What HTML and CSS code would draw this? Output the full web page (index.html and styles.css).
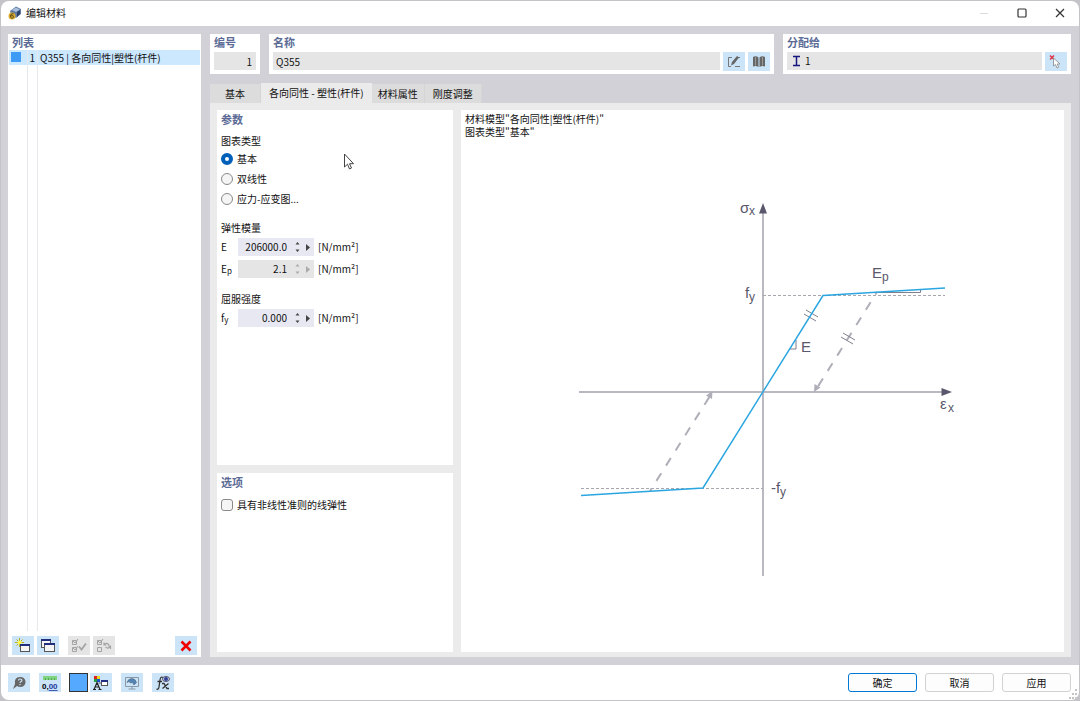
FILE: index.html
```html
<!DOCTYPE html>
<html lang="zh-CN">
<head>
<meta charset="utf-8">
<title>编辑材料</title>
<link rel="stylesheet" href="styles.css">
</head>
<body>
<div class="window">
  <header class="titlebar">
    <svg class="app-icon" width="14" height="14" viewBox="0 0 14 14">
      <path d="M2 5 8 0.500 13 3 13 8 8 12 3 9z" fill="#5f7ba5"/>
      <path d="M4 4 8 1.500 12 3.500 8 6z" fill="#a9bfdc"/>
      <path d="M9 6 12 4v4l-3 3z" fill="#2d4468"/>
      <circle cx="4" cy="10" r="3.500" fill="#d9ad30"/>
      <path d="M5.500 8c-2-.8-3 .6-3 2.200 0 2.500 3 2.300 3 .5 0-1.400-2-1.500-2.800-.3" fill="none" stroke="#554319"/>
    </svg>
    <h1 class="title">编辑材料</h1>
    <div class="window-buttons">
      <button class="window-button" aria-label="最小化"><svg width="10" height="10" viewBox="0 0 10 10"><path d="M1 5.500h8" stroke="#dcdcdc"/></svg></button>
      <button class="window-button" aria-label="最大化"><svg width="10" height="10" viewBox="0 0 10 10"><rect x="1" y="1" width="8" height="8" rx="1" fill="none" stroke="#333" stroke-width="1.200"/></svg></button>
      <button class="window-button" aria-label="关闭"><svg width="10" height="10" viewBox="0 0 10 10"><path d="M1 1l8 8M9 1 1 9" stroke="#333" stroke-width="1.200"/></svg></button>
    </div>
  </header>

  <main class="workspace">
    <section class="panel list-panel">
      <h2 class="heading">列表</h2>
      <div class="list">
        <button class="list-row">
          <span class="cell cell-color"><span class="swatch"></span></span>
          <span class="cell cell-number">1</span>
          <span class="cell-name">Q355 | 各向同性|塑性(杆件)</span>
        </button>
        <div class="list-row list-rest"><span class="cell cell-color"></span><span class="cell cell-number"></span></div>
      </div>
      <div class="list-tools">
        <button class="tool" aria-label="新建"><svg width="16" height="16" viewBox="0 0 16 16"><path d="M4.500 0v9M0 4.500h9M1.500 1.500l6 6M7.500 1.500l-6 6" stroke="#b5ae1c"/><circle cx="4.500" cy="4.500" r="2" fill="#fff64a"/><rect x="5.500" y="6.500" width="9" height="7" fill="#f5f5f5" stroke="#555"/><path d="M5 7h10" stroke="#222d80" stroke-width="2"/></svg></button>
        <button class="tool" aria-label="复制"><svg width="16" height="16" viewBox="0 0 16 16"><rect x="1.500" y="1.500" width="9" height="8" fill="#f5f5f5" stroke="#555"/><path d="M1 2h10" stroke="#222d80" stroke-width="2"/><rect x="4.500" y="5.500" width="10" height="8" fill="#f5f5f5" stroke="#555"/><path d="M4 6h11" stroke="#222d80" stroke-width="2"/></svg></button>
        <button class="tool tool-gap" disabled aria-label="全选"><svg width="16" height="16" viewBox="0 0 16 16" fill="none" stroke="#a4a4a4"><path d="M1.500 2.500h4v4h-4zM1.500 9.500h4v4h-4zM2 3l2 2 3-4M2 10l2 2 3-4"/><path d="M8 8.500l2.500 3L15 5.500" stroke-width="1.800"/></svg></button>
        <button class="tool" disabled aria-label="反选"><svg width="16" height="16" viewBox="0 0 16 16" fill="none" stroke="#a4a4a4"><path d="M1.500 2.500h4v4h-4zM1.500 9.500h4v4h-4zM2 3l2 2 3-4"/><path d="M8 7q1-2 3.500-1.500L13 7M8 4.500V7h2.500M14.500 8q-1 2.500-3.500 2L9.500 9M14.500 11V8H12" stroke-width="1.200"/></svg></button>
        <button class="tool tool-end" aria-label="删除"><svg width="16" height="16" viewBox="0 0 16 16"><path d="M3.500 3.500l9 9M12.500 3.500l-9 9" stroke="#f00000" stroke-width="2.600"/></svg></button>
      </div>
    </section>

    <div class="details">
      <div class="summary">
        <section class="panel summary-panel">
          <label class="heading" for="number">编号</label>
          <input class="readonly align-right" id="number" value="1" readonly>
        </section>
        <section class="panel summary-panel">
          <label class="heading" for="name">名称</label>
          <div class="field-row">
            <input class="readonly" id="name" value="Q355" readonly>
            <button class="tool" aria-label="编辑名称"><svg width="16" height="16" viewBox="0 0 16 16"><path d="M6 3.500H2.500v9H5M9 12.500h5M12 3.500h2" fill="none" stroke="#777"/><path d="M5 11.500l1-3.500 5-6 2 1.500-5 6.500z" fill="#666"/></svg></button>
            <button class="tool" aria-label="材料库"><svg width="16" height="16" viewBox="0 0 16 16"><path d="M2 3q3-1.500 5.500.5v9.500Q5 11.500 2 12.500zM14 3q-3-1.500-5.500.5v9.500q2.500-1.500 5.500-.5z" fill="#666"/><path d="M4.500 3v8.500M11.500 3v8.500" stroke="#999"/></svg></button>
          </div>
        </section>
        <section class="panel summary-panel">
          <label class="heading" for="assigned">分配给</label>
          <div class="field-row">
            <div class="readonly assigned">
              <svg width="9" height="12" viewBox="0 0 9 12"><path d="M1 1.500h7M1 10.500h7M4.500 1v9" stroke="#171780" stroke-width="1.500"/></svg>
              <input class="assigned-input" id="assigned" value="1" readonly>
            </div>
            <button class="tool" aria-label="选择"><svg width="16" height="16" viewBox="0 0 16 16"><path d="M2 1.500l4 4M6 1.500l-4 4" stroke="#e03040" stroke-width="1.400"/><path d="M5.500 4v8l2-1.500 1.500 3.500 1.700-.8L9.200 10H12z" fill="#fff" stroke="#888" stroke-width=".8"/></svg></button>
          </div>
        </section>
      </div>

      <nav class="tabs" role="tablist">
        <button class="tab tab-first" role="tab">基本</button>
        <button class="tab tab-active" role="tab" aria-selected="true">各向同性 - 塑性(杆件)</button>
        <button class="tab" role="tab">材料属性</button>
        <button class="tab" role="tab">刚度调整</button>
      </nav>

      <div class="page">
        <section class="panel parameters">
          <h2 class="heading">参数</h2>
          <fieldset class="group">
            <legend class="group-title">图表类型</legend>
            <label class="choice"><input type="radio" name="diagram" checked>基本</label>
            <label class="choice"><input type="radio" name="diagram">双线性</label>
            <label class="choice"><input type="radio" name="diagram">应力-应变图...</label>
          </fieldset>
          <fieldset class="group">
            <legend class="group-title">弹性模量</legend>
            <div class="value-row">
              <label class="symbol" for="e">E</label>
              <div class="spinner"><input class="spinner-input" id="e" value="206000.0"><button class="spinner-button" aria-label="增减"><svg width="5" height="10" viewBox="0 0 5 10"><path d="M.5 2.500 2.500 0l2 2.500zM.5 7.500h4l-2 2.500z"/></svg></button><button class="spinner-button" aria-label="更多"><svg width="5" height="7" viewBox="0 0 5 7"><path d="M0 0l4 3.500L0 7z"/></svg></button></div>
              <span class="unit">[N/mm²]</span>
            </div>
            <div class="value-row">
              <label class="symbol" for="ep">E<sub>p</sub></label>
              <div class="spinner spinner-disabled"><input class="spinner-input" id="ep" value="2.1" readonly><button class="spinner-button" disabled aria-label="增减"><svg width="5" height="10" viewBox="0 0 5 10"><path d="M.5 2.500 2.500 0l2 2.500zM.5 7.500h4l-2 2.500z"/></svg></button><button class="spinner-button" disabled aria-label="更多"><svg width="5" height="7" viewBox="0 0 5 7"><path d="M0 0l4 3.500L0 7z"/></svg></button></div>
              <span class="unit">[N/mm²]</span>
            </div>
          </fieldset>
          <fieldset class="group">
            <legend class="group-title">屈服强度</legend>
            <div class="value-row">
              <label class="symbol" for="fy">f<sub>y</sub></label>
              <div class="spinner"><input class="spinner-input" id="fy" value="0.000"><button class="spinner-button" aria-label="增减"><svg width="5" height="10" viewBox="0 0 5 10"><path d="M.5 2.500 2.500 0l2 2.500zM.5 7.500h4l-2 2.500z"/></svg></button><button class="spinner-button" aria-label="更多"><svg width="5" height="7" viewBox="0 0 5 7"><path d="M0 0l4 3.500L0 7z"/></svg></button></div>
              <span class="unit">[N/mm²]</span>
            </div>
          </fieldset>
        </section>

        <section class="panel options">
          <h2 class="heading">选项</h2>
          <label class="choice"><input type="checkbox">具有非线性准则的线弹性</label>
        </section>

        <section class="panel diagram">
          <p class="caption">材料模型"各向同性|塑性(杆件)"</p>
          <p class="caption">图表类型"基本"</p>
          <div class="chart-area">
            <svg class="chart" width="390" height="400" viewBox="568 196 390 400" role="img" aria-label="应力-应变图">
              <g class="axis"><path d="M579 393H943M763 577V212"/></g>
              <path class="arrow" d="M763 204l4 10.500h-8zM952 393l-10.500 4v-8z"/>
              <path class="limit" d="M763 296.500H945M581 489.500H763"/>
              <path class="unload" d="M877 293 817 389M650 492 710 397"/>
              <path class="unload-arrow" d="M814 393l.5-8 6 3.500zM712.500 392l-.5 8-6-3.500z"/>
              <path class="mark" d="M806 311l12 7M804 315l12 7M843 334l12 7M841 338l12 7M796 341v9h-6M877 293.500h43.500v-3"/>
              <path class="curve" d="M945 289 823 296.500 703 489 581 496.500"/>
              <g class="chart-text">
                <text x="740" y="214">σ<tspan class="small" x="749" y="216">x</tspan></text>
                <text x="745" y="299">f<tspan class="small" x="749" y="302">y</tspan></text>
                <text x="872" y="279">E<tspan class="small" x="882" y="282">p</tspan></text>
                <text x="801" y="353">E</text>
                <text x="940" y="410">ε<tspan class="small" x="948" y="413">x</tspan></text>
                <text x="771" y="494">-f<tspan class="small" x="780" y="497">y</tspan></text>
              </g>
            </svg>
          </div>
        </section>
      </div>
    </div>
  </main>

  <footer class="footer">
    <div class="footer-tools">
      <button class="tool" aria-label="帮助"><svg width="16" height="16" viewBox="0 0 16 16"><path d="M9 2a5 5 0 0 1 1 10Q7 12 6 11l-4 3 2-5Q3 2 9 2z" fill="#666"/><path d="M7.500 5.500q0-1.500 1.800-1.500t1.500 2Q9 7 9 8M9 9v1.300" fill="none" stroke="#cde5f8" stroke-width="1.200"/></svg></button>
      <button class="tool" aria-label="单位"><svg width="18" height="16" viewBox="0 0 18 16"><path d="M2 1h14v4H2z" fill="#7fd67f"/><path d="M4.500 3v2M7.500 3v2M10.500 3v2M13.500 3v2" stroke="#58a058"/><text class="icon-text" x="1" y="14">0,<tspan fill="#2038a0" text-decoration="underline">00</tspan></text></svg></button>
      <button class="color-button" aria-label="颜色"></button>
      <button class="tool" aria-label="显示"><svg width="18" height="16" viewBox="0 0 18 16"><path d="M2 1h3v3H2z" fill="#e02020"/><path d="M5 1h3v3H5z" fill="#e8d820"/><path d="M2 4h3v3H2z" fill="#22a040"/><path d="M5 4h3v3H5z" fill="#2050d0"/><path d="M2 14.500 5 7.500l3 7M3 12h4M1 14.500h3M6.500 14.500h3" fill="none" stroke="#222" stroke-width="1.200"/><rect x="9.500" y="5.500" width="6" height="5" fill="#fff" stroke="#555"/><path d="M6.500 8H9" stroke="#555"/><path d="M9 6h7" stroke="#222d80" stroke-width="2"/></svg></button>
      <button class="tool tool-gap" aria-label="视图"><svg width="16" height="16" viewBox="0 0 16 16"><path d="M1.500 2.500h13v9h-13zM8 12v2M4.500 14h7" fill="none" stroke="#8a98a6"/><path d="M3 7.500Q4 4 7.500 3.500q4 0 5 4L10 10 8.500 7.500 6.500 8 5 6.500z" fill="#5283b5" stroke="#536577" stroke-width=".6"/></svg></button>
      <button class="tool tool-gap" aria-label="公式"><svg width="16" height="16" viewBox="0 0 16 16"><path d="M8 2.500Q5.500 1 5 5L4 12q-.5 3-2.500 2M2.500 6.500H7M7 8.500h2l3 5h2M13.500 8.500 7.500 13.500" fill="none" stroke="#333" stroke-width="1.300"/><ellipse cx="11" cy="4" rx="3.500" ry="2.500" fill="#cfd4ea" stroke="#556"/><circle cx="11" cy="4" r="2" fill="#30409a"/></svg></button>
    </div>
    <div class="actions">
      <button class="action action-primary">确定</button>
      <button class="action">取消</button>
      <button class="action">应用</button>
    </div>
    <svg class="grip" width="10" height="10" viewBox="0 0 10 10"><path d="M7 0h2v2H7zM7 4h2v2H7zM7 8h2v2H7zM4 4h2v2H4zM4 8h2v2H4zM1 8h2v2H1z" fill="#c4c4c4"/></svg>
  </footer>
  <svg class="pointer" width="12" height="18" viewBox="0 0 12 18"><path d="M1.500 1v13l3-2.800L6.500 16l2-1-2-4.300h4z" fill="#fff" stroke="#444"/></svg>
</div>
</body>
</html>
```
FILE: styles.css
```css
* { box-sizing: border-box; }
body {
  margin: 0;
  padding: 1px;
  min-height: 100vh;
  display: flex;
  background: #c4c4c8;
  color: #111;
  font: 10px/16px "Noto Sans CJK SC", "Noto Sans", sans-serif;
}
button, input {
  font: inherit;
  color: inherit;
  border: 0;
  border-radius: 0;
  padding: 0;
  margin: 0;
  min-width: 0;
}
button {
  background: none;
  display: flex;
  align-items: center;
  justify-content: center;
}
svg { display: block; }
sub {
  font-size: 8px;
  line-height: 1;
  vertical-align: -1px;
}
.window {
  position: relative;
  flex: 1;
  display: flex;
  flex-direction: column;
  background: #fff;
  border-radius: 8px;
  overflow: hidden;
}
.titlebar {
  height: 25px;
  display: flex;
  align-items: center;
  gap: 4px;
  padding: 0 0 2px 7px;
}
.title {
  flex: 1;
  margin: 0;
  font-size: 10px;
  font-weight: 400;
}
.window-buttons { display: flex; }
.window-button {
  width: 38px;
  height: 22px;
}
.workspace {
  flex: 1;
  display: grid;
  grid-template-columns: 193px 1fr;
  gap: 9px;
  padding: 8px 8px 8px 7px;
  background: #d1d1d7;
}
.panel { background: #fff; }
.heading {
  display: block;
  margin: 0;
  padding: 0 4px;
  color: #5b6b96;
  font-size: 11px;
  line-height: 16px;
  font-weight: 700;
}
.list-panel {
  display: flex;
  flex-direction: column;
}
.list {
  flex: 1;
  display: flex;
  flex-direction: column;
  padding: 0 1px;
}
.list-row {
  height: 15px;
  display: flex;
  align-items: center;
  justify-content: flex-start;
  line-height: 15px;
  background: #cce8ff;
}
.list-rest {
  flex: 1;
  background: none;
}
.cell {
  height: 100%;
  border-right: 1px solid #e6e9ec;
}
.cell-color {
  width: 19px;
  padding: 2px;
}
.cell-number {
  width: 10px;
  text-align: right;
  padding-right: 2px;
}
.cell-name { padding-left: 2px; }
.swatch {
  display: block;
  width: 10px;
  height: 10px;
  background: #3d9bf5;
}
.list-tools {
  display: flex;
  gap: 3px;
  padding: 5px 4px 2px;
}
.tool {
  flex: none;
  width: 22px;
  height: 19px;
  background: #cce4f7;
}
.list-tools .tool:disabled { background: #e5e5e5; }
.tool-gap { margin-left: 6px; }
.tool-end { margin-left: auto; }
.details {
  display: flex;
  flex-direction: column;
}
.summary {
  display: grid;
  grid-template-columns: 50px 1fr 288px;
  gap: 9px;
}
.summary-panel {
  height: 40px;
  padding: 0 4px;
}
.summary-panel .heading { padding: 0; }
.field-row {
  display: flex;
  gap: 3px;
  margin-top: 2px;
}
.readonly {
  height: 18px;
  flex: 1;
  padding: 0 3px;
  background: #e5e5e5;
}
.summary-panel > .readonly {
  display: block;
  width: 100%;
  margin-top: 2px;
}
.align-right {
  text-align: right;
  padding-right: 4px;
}
.assigned {
  display: flex;
  align-items: center;
  gap: 4px;
  padding-left: 5px;
}
.assigned-input {
  flex: 1;
  background: none;
}
.tabs {
  display: flex;
  align-items: flex-end;
  margin-top: 9px;
}
.tab {
  height: 19px;
  padding: 0 6px;
  background: #dcdcdc;
  border-right: 1px solid #d5d5d5;
}
.tab:last-child { padding: 0 8px; }
.tab-first { padding: 0 15px; }
.tab-active {
  height: 20px;
  padding: 0 8px;
  background: #ebebeb;
  border: 0;
}
.page {
  flex: 1;
  display: grid;
  grid-template-columns: 236px 1fr;
  grid-template-rows: 355fr 179fr;
  gap: 8px;
  padding: 7px 7px 5px;
  background: #ebebeb;
}
.parameters .heading, .options .heading { line-height: 18px; }
.group {
  min-width: 0;
  margin: 5px 0 11px;
  padding: 0 4px;
  border: 0;
}
.group + .group { margin-bottom: 13px; }
.group-title {
  padding: 0;
  line-height: 16px;
}
.choice {
  display: flex;
  align-items: center;
  gap: 4px;
  height: 20px;
}
.choice input {
  appearance: none;
  width: 12px;
  height: 12px;
  border: 1px solid #8a8a8a;
  background: #f5f5f5;
}
.choice input[type="radio"] { border-radius: 50%; }
.choice input[type="checkbox"] { border-radius: 3px; }
.choice input:checked {
  border: 4px solid #005fb8;
  background: #fff;
}
.options .choice { margin: 4px; }
.value-row {
  display: flex;
  align-items: center;
  height: 18px;
  margin-top: 2px;
}
.value-row + .value-row { margin-top: 4px; }
.symbol { width: 17px; }
.spinner {
  display: flex;
  width: 76px;
  height: 18px;
  background: #e8e8f3;
  fill: #444;
}
.spinner-disabled {
  background: #e5e5e5;
  fill: #aaa;
}
.spinner-input {
  width: 49px;
  background: none;
  text-align: right;
}
.spinner-button { width: 12px; }
.spinner-button + .spinner-button { width: 11px; }
.spinner-button:first-of-type { margin-left: 4px; }
.unit { margin-left: 4px; }
.diagram {
  grid-column: 2;
  grid-row: 1 / 3;
  display: flex;
  flex-direction: column;
  padding-top: 2px;
}
.caption {
  margin: 0;
  padding: 0 4px;
  line-height: 13px;
}
.chart-area {
  flex: 1;
  display: flex;
  align-items: center;
  justify-content: center;
}
.axis {
  stroke: #b9b9c1;
  stroke-width: 2;
}
.arrow { fill: #5a586c; }
.limit {
  stroke: #a6a6ac;
  stroke-dasharray: 3 2;
}
.unload {
  stroke: #b0aeb8;
  stroke-width: 2;
  stroke-dasharray: 9 9;
  stroke-dashoffset: 6;
}
.unload-arrow { fill: #b0aeb8; }
.mark {
  fill: none;
  stroke: #817f8c;
}
.curve {
  fill: none;
  stroke: #2ba6e1;
  stroke-width: 1.500;
}
.chart-text {
  fill: #5a586c;
  font: 15px "Liberation Sans", sans-serif;
}
.small { font-size: 12px; }
.icon-text {
  font: bold 8px "Liberation Sans", sans-serif;
}
.footer {
  position: relative;
  height: 35px;
  display: flex;
  align-items: center;
  justify-content: space-between;
  padding: 0 8px 0 7px;
}
.footer-tools {
  display: flex;
  gap: 2px;
}
.footer-tools .tool + .tool { margin-left: 7px; }
.color-button {
  width: 19px;
  height: 19px;
  margin-left: 6px;
  border: 1px solid #333;
  background: #55aaff;
}
.actions {
  display: flex;
  gap: 8px;
}
.action {
  width: 69px;
  height: 19px;
  border: 1px solid #d2d2d2;
  border-radius: 3px;
  background: #fdfdfd;
}
.action-primary { border-color: #0078d4; }
.grip {
  position: absolute;
  right: 1px;
  bottom: 1px;
}
.pointer {
  position: absolute;
  left: 342px;
  top: 152px;
}
```
